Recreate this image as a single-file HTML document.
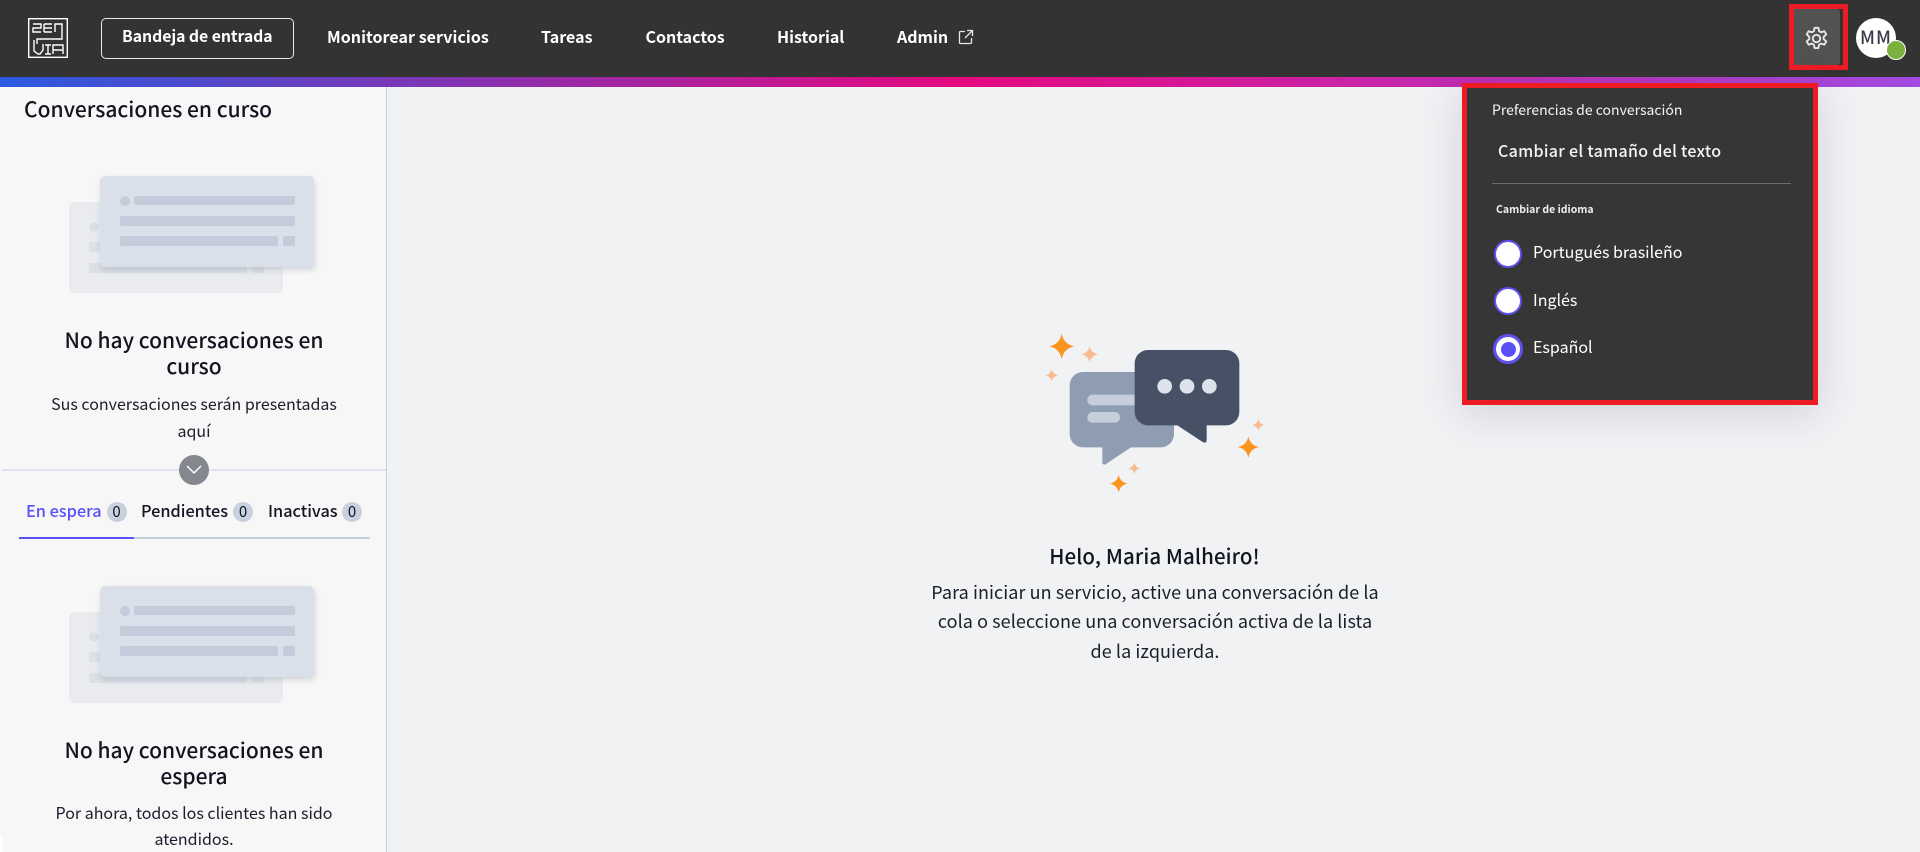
<!DOCTYPE html>
<html lang="es"><head><meta charset="utf-8"><title>Conversaciones</title>
<style>
html,body{margin:0;padding:0;width:1920px;height:852px;overflow:hidden;background:#f1f2f4;font-family:"Noto Sans CJK JP","Liberation Sans",sans-serif;color:#12141f}
.a{position:absolute;white-space:nowrap;line-height:1}
.c{position:absolute;white-space:nowrap;text-align:center;line-height:1;transform:translateX(-50%)}
.nav{color:#fff;font-weight:700;font-size:16px;top:28px}
.card{position:absolute;width:214px;height:91px;border-radius:5px}
.card i{position:absolute;display:block;border-radius:2px}
.badge{position:absolute;width:20px;height:20px;border-radius:50%;background:#c8d1e0;text-align:center;font-size:15px;line-height:20px;color:#12141f}
.radio{position:absolute;box-sizing:border-box;background:#fff;border-radius:50%;border:2px solid #5f50f0;width:28px;height:28px;left:1494px}
.h{font-size:21px;font-weight:500}
.p{font-size:16px;font-weight:400;letter-spacing:0;color:#1c1e2c}
.q{font-size:18px;font-weight:400;letter-spacing:.07px;color:#1c1e2c}
</style></head><body>
<div class="a" style="left:0;top:0;width:1920px;height:77px;background:#333"></div>
<div class="a" style="left:0;top:77px;width:1920px;height:10px;background:linear-gradient(90deg,#2b5be0 0,#e6087f 50%,#a14be0 100%)"></div>
<svg class="a" style="left:28px;top:18px" width="40" height="40" viewBox="0 0 40 40" fill="none" stroke="#fff" stroke-width="1.4"><rect x=".7" y=".7" width="38.6" height="38.6"/><path d="M5 6H13V10H5V14H13M16 6H24M16 10H24M16 14H24M16 6V14M27 14V6H34V21H9V26"/><path d="M6 22V33L10 36H12L15 32V26M17 27H23M20 27V36M17 36H23M25 36V27H35V36M25 32H35"/></svg>
<div class="a" style="left:101px;top:18px;width:191px;height:39px;border:1px solid #e8e8e8;border-radius:5px"></div>
<div class="a nav" style="left:122px;letter-spacing:-.05px;font-size:15.800px">Bandeja de entrada</div>
<div class="a nav" style="left:327px;letter-spacing:.05px">Monitorear servicios</div>
<div class="a nav" style="left:541px">Tareas</div>
<div class="a nav" style="left:645.500px">Contactos</div>
<div class="a nav" style="left:777px">Historial</div>
<div class="a nav" style="left:897px">Admin</div>
<svg class="a" style="left:958px;top:29px" width="16" height="16" viewBox="0 0 16 16" fill="none" stroke="#e8e8e8" stroke-width="1.3"><path d="M7 2.5H2.5a1 1 0 0 0-1 1V13.5a1 1 0 0 0 1 1H12.500a1 1 0 0 0 1-1V9M9 1.500H14.500V7M14.500 1.500L7 9"/></svg>

<div class="a" style="left:1794px;top:9px;width:46px;height:56px;background:#525252;border-radius:0 3px 3px 0"></div>
<div class="a" style="left:1789px;top:4px;width:49px;height:56px;border:5px solid #ed1c24;box-sizing:content-box"></div>
<svg class="a" style="left:1802.500px;top:24.500px" width="27" height="27" viewBox="0 0 24 24" fill="none" stroke="#e6e6e6" stroke-width="1.700" stroke-linejoin="round"><path d="M10.300 2.500h3.400l.6 3 1.800 1 2.900-1 1.700 2.900-2.300 2v2.200l2.300 2-1.700 2.900-2.900-1-1.800 1-.6 3h-3.400l-.6-3-1.800-1-2.900 1-1.700-2.900 2.300-2v-2.200l-2.300-2 1.700-2.900 2.900 1 1.800-1z"/><circle cx="12" cy="12" r="3.300"/></svg>
<div class="a" style="left:1856px;top:18px;width:40px;height:40px;border-radius:50%;background:#fff;color:#3a3a4c;font-size:18px;font-weight:500;text-align:center;line-height:38px;letter-spacing:1px">MM</div>
<div class="a" style="left:1886px;top:40px;width:18px;height:18px;border:1px solid #fff;border-radius:50%;background:#7cb03f"></div>

<div class="a" style="left:0;top:87px;width:386px;height:765px;background:#f7f7f7;border-right:1.500px solid #c5cedf"></div>
<div class="a" style="left:0;top:837px;width:2px;height:15px;background:#fff"></div>
<div class="a" style="left:24px;top:99px;font-size:21px;font-weight:500">Conversaciones en curso</div>

<div class="card" style="left:69px;top:202px;background:#e9ebef"><i style="left:20px;top:20px;width:10px;height:10px;border-radius:50%;background:#dcdfe6"></i><i style="left:20px;top:40px;width:158px;height:10px;background:#dcdfe6"></i><i style="left:20px;top:61px;width:158px;height:10px;background:#dcdfe6"></i><i style="left:183px;top:61px;width:12px;height:10px;background:#dcdfe6"></i></div>
<div class="card" style="left:100px;top:176px;background:#d9e0e9;box-shadow:1px 3px 6px rgba(100,110,130,.25)"><i style="left:20px;top:20px;width:10px;height:10px;border-radius:50%;background:#c5cbda"></i><i style="left:34px;top:20px;width:161px;height:9px;background:#c5cbda"></i><i style="left:20px;top:40px;width:175px;height:10px;background:#c5cbda"></i><i style="left:20px;top:60px;width:158px;height:10px;background:#c5cbda"></i><i style="left:183px;top:60px;width:12px;height:10px;background:#c5cbda"></i></div>
<div class="c h" style="left:194px;top:330px">No hay conversaciones en</div>
<div class="c h" style="left:194px;top:356px">curso</div>
<div class="c p" style="left:194px;top:395px">Sus conversaciones serán presentadas</div>
<div class="c p" style="left:194px;top:422px">aquí</div>

<div class="a" style="left:2px;top:469px;width:384px;height:2px;background:#dde2ee"></div>
<div class="a" style="left:179px;top:455px;width:30px;height:30px;border-radius:50%;background:#85878e"></div>
<svg class="a" style="left:185px;top:464px" width="18" height="12" viewBox="0 0 18 12" fill="none" stroke="#fff" stroke-width="1.500"><path d="M2 2L9 9L16 2"/></svg>
<div class="a" style="left:26px;top:502px;font-size:16.300px;font-weight:500;color:#5b4ff9">En espera</div>
<div class="badge" style="left:106.500px;top:502px">0</div>
<div class="a" style="left:141px;top:502px;font-size:16.300px;font-weight:500">Pendientes</div>
<div class="badge" style="left:233px;top:502px">0</div>
<div class="a" style="left:268px;top:502px;font-size:16.300px;font-weight:500">Inactivas</div>
<div class="badge" style="left:342px;top:502px">0</div>
<div class="a" style="left:19px;top:537px;width:351px;height:2px;background:#c5cedf"></div>
<div class="a" style="left:19px;top:537px;width:115px;height:2px;background:#5b4ff9"></div>

<div class="card" style="left:69px;top:612px;background:#e9ebef"><i style="left:20px;top:20px;width:10px;height:10px;border-radius:50%;background:#dcdfe6"></i><i style="left:20px;top:40px;width:158px;height:10px;background:#dcdfe6"></i><i style="left:20px;top:61px;width:158px;height:10px;background:#dcdfe6"></i><i style="left:183px;top:61px;width:12px;height:10px;background:#dcdfe6"></i></div>
<div class="card" style="left:100px;top:586px;background:#d9e0e9;box-shadow:1px 3px 6px rgba(100,110,130,.25)"><i style="left:20px;top:20px;width:10px;height:10px;border-radius:50%;background:#c5cbda"></i><i style="left:34px;top:20px;width:161px;height:9px;background:#c5cbda"></i><i style="left:20px;top:40px;width:175px;height:10px;background:#c5cbda"></i><i style="left:20px;top:60px;width:158px;height:10px;background:#c5cbda"></i><i style="left:183px;top:60px;width:12px;height:10px;background:#c5cbda"></i></div>
<div class="c h" style="left:194px;top:740px">No hay conversaciones en</div>
<div class="c h" style="left:194px;top:766px">espera</div>
<div class="c p" style="left:194px;top:804px">Por ahora, todos los clientes han sido</div>
<div class="c p" style="left:194px;top:830px">atendidos.</div>

<svg class="a" style="left:1020px;top:320px" width="280" height="190" viewBox="0 0 840 570">
<path d="M189 156H422a40 40 0 0 1 40 40V342a40 40 0 0 1-40 40H333L258 432Q247 438 247 425V382H189a40 40 0 0 1-40-40V196a40 40 0 0 1 40-40Z" fill="#8f9db2"/>
<rect x="202" y="224" width="160" height="32" rx="16" fill="#c5cfdc"/><rect x="202" y="276" width="98" height="32" rx="16" fill="#c5cfdc"/>
<path d="M384 90H618a40 40 0 0 1 40 40V276a40 40 0 0 1-40 40H560V358Q560 372 548 366L472 316H384a40 40 0 0 1-40-40V130a40 40 0 0 1 40-40Z" fill="#465165"/>
<circle cx="434" cy="199" r="22" fill="#dde3ea"/><circle cx="501" cy="199" r="22" fill="#dde3ea"/><circle cx="568" cy="199" r="22" fill="#dde3ea"/>
<g fill="#fb951f"><path d="M125 41Q131 73 163 79Q131 85 125 118Q119 85 88 79Q119 73 125 41Z"/><path d="M685 349Q690 376 718 381Q690 386 685 414Q680 386 652 381Q680 376 685 349Z"/><path d="M296 464Q300 487 323 491Q300 495 296 518Q292 495 269 491Q292 487 296 464Z"/></g>
<g fill="#f9bb91"><path d="M209 78Q213 99 234 103Q213 107 209 128Q205 107 184 103Q205 99 209 78Z"/><path d="M95 147Q98 163 114 166Q98 169 95 185Q92 169 76 166Q92 163 95 147Z"/><path d="M715 297Q718 312 733 315Q718 318 715 333Q712 318 697 315Q712 312 715 297Z"/><path d="M343 428Q346 442 360 445Q346 448 343 462Q340 448 326 445Q340 442 343 428Z"/></g>
</svg>
<div class="c" style="left:1154.500px;top:545px;font-size:20.500px;font-weight:500;letter-spacing:.1px">Helo, Maria Malheiro!</div>
<div class="c q" style="left:1155px;top:583px">Para iniciar un servicio, active una conversación de la</div>
<div class="c q" style="left:1155px;top:612px">cola o seleccione una conversación activa de la lista</div>
<div class="c q" style="left:1155px;top:642px">de la izquierda.</div>

<div class="a" style="left:1462px;top:83px;width:346px;height:312px;background:#363636;border:5px solid #ed1c24;box-shadow:0 8px 40px rgba(60,65,80,.18)"></div>
<div class="a" style="left:1492px;top:103px;font-size:14px;font-weight:400;color:#f4f4f4">Preferencias de conversación</div>
<div class="a" style="left:1498px;top:142px;font-size:16px;font-weight:500;color:#f6f6f6;letter-spacing:.3px">Cambiar el tamaño del texto</div>
<div class="a" style="left:1492px;top:183px;width:299px;height:1px;background:#6b6b78"></div>
<div class="a" style="left:1496px;top:205px;font-size:10.500px;font-weight:700;color:#f0f0f0">Cambiar de idioma</div>
<div class="radio" style="top:240px"></div>
<div class="a" style="left:1533px;top:243px;font-size:16px;font-weight:400;color:#fff">Portugués brasileño</div>
<div class="radio" style="top:287px"></div>
<div class="a" style="left:1533px;top:291px;font-size:16px;font-weight:400;color:#fff">Inglés</div>
<div class="radio" style="top:334px;left:1493px;width:30px;height:30px;border-width:3px"></div>
<div class="a" style="left:1500.500px;top:341.500px;width:15px;height:15px;border-radius:50%;background:#5b4ff9"></div>
<div class="a" style="left:1533px;top:338px;font-size:16px;font-weight:400;color:#fff">Español</div>
</body></html>
